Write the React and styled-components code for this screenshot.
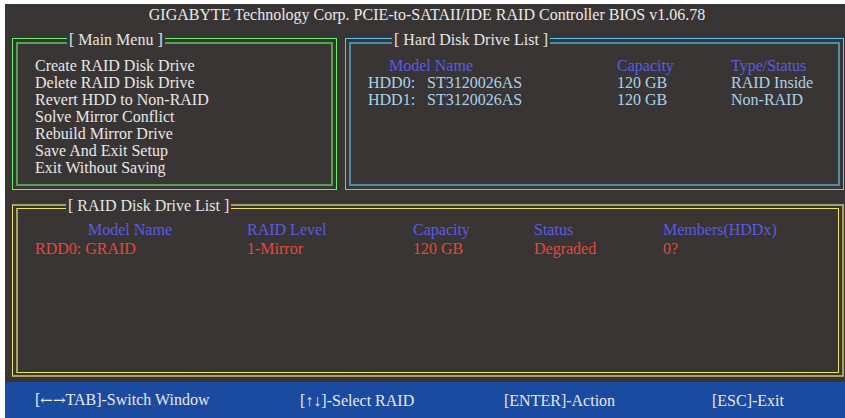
import React from "react";
import styled, { createGlobalStyle } from "styled-components";

const BG = "#393534";

const Global = createGlobalStyle`
  html, body { margin: 0; padding: 0; background: #ffffff; }
  body { font-family: "Liberation Serif", "Times New Roman", serif; }
`;

const Screen = styled.div`
  margin: 4px 0 0 5px;
  width: 840px;
  height: 414px;
  background: ${BG};
  display: flex;
  flex-direction: column;
  font-family: "Liberation Serif", "Times New Roman", serif;
  font-size: 16px;
  line-height: 17px;
  color: #e6e6e6;
`;

const Header = styled.header`
  height: 34px;
  line-height: 22px;
  padding-left: 4px;
  text-align: center;
  color: #eaeaea;
  white-space: nowrap;
`;

const Main = styled.main`
  padding: 0 1px 0 7px;
  display: flex;
  flex-direction: column;
`;

const TopRow = styled.div`
  display: grid;
  grid-template-columns: 325px 499px;
  column-gap: 8px;
  height: 152px;
  margin-bottom: 14px;
`;

const Panel = styled.section`
  position: relative;
  box-sizing: border-box;
  height: ${(p) => p.$h}px;
  border: 1px solid ${(p) => p.$outer};
  box-shadow: inset 0 0 0 3px ${BG}, inset 0 0 0 5px ${(p) => p.$inner};
  padding: ${(p) => p.$pt}px 8px 0 22px;
`;

const RaidPanel = styled(Panel)`
  border-style: solid;
  border-width: 2px 2px 2px 1px;
  border-color: ${(p) => p.$inner} ${(p) => p.$inner} ${(p) => p.$inner} ${(p) => p.$outer};
  box-shadow: none;

  &::before {
    content: "";
    position: absolute;
    top: 2px;
    left: 3px;
    right: 3px;
    bottom: 2px;
    border-style: solid;
    border-width: 1px 1px 1px 2px;
    border-color: ${(p) => p.$outer} ${(p) => p.$outer} ${(p) => p.$outer} ${(p) => p.$inner};
    pointer-events: none;
  }
`;

const PanelTitle = styled.h2`
  position: absolute;
  z-index: 1;
  top: ${(p) => p.$top ?? -8}px;
  left: ${(p) => p.$left}px;
  margin: 0;
  padding: 0 2px;
  background: ${BG};
  font-size: 16px;
  font-weight: normal;
  line-height: 17px;
  color: #e6e6e6;
  white-space: nowrap;
`;

const MenuList = styled.ul`
  list-style: none;
  margin: 0;
  padding: 0;
`;

const MenuItem = styled.li`
  color: #e8e8e8;
  white-space: nowrap;
`;

const Row = styled.div`
  position: relative;
  display: grid;
  grid-template-columns: ${(p) => p.$cols};
  color: ${(p) => p.$color};
  white-space: nowrap;
  margin-bottom: ${(p) => p.$gap || 0}px;
`;

const Cell = styled.span`
  padding-left: ${(p) => p.$indent || 0}px;
  grid-column: ${(p) => p.$span || "auto"};
`;

const Footer = styled.footer`
  margin-top: 5px;
  height: 36px;
  background: #1a4ba1;
  display: grid;
  grid-template-columns: 265px 204px 208px auto;
  align-items: center;
  padding-left: 30px;
  color: #e8e8e8;
  white-space: nowrap;
`;

const Arrow = styled.span`
  font-family: ${(p) =>
    p.$wide ? '"DejaVu Serif", "Liberation Serif", serif' : '"Liberation Serif", serif'};
  font-size: ${(p) => (p.$wide ? 15 : 16)}px;
`;

const HEAD = "#5b5be4";
const HDD = "#a9d3ea";
const RED = "#e2493a";

const hddCols = "59px 190px 114px auto";
const raidCols = "212px 166px 121px 129px auto";

export default function App() {
  return (
    <>
      <Global />
      <Screen>
        <Header>GIGABYTE Technology Corp. PCIE-to-SATAII/IDE RAID Controller BIOS v1.06.78</Header>
        <Main>
          <TopRow>
            <Panel $h={152} $outer="#66ee66" $inner="#5a9d55" $pt={18}>
              <PanelTitle $left={54}>[ Main Menu ]</PanelTitle>
              <MenuList>
                <MenuItem>Create RAID Disk Drive</MenuItem>
                <MenuItem>Delete RAID Disk Drive</MenuItem>
                <MenuItem>Revert HDD to Non-RAID</MenuItem>
                <MenuItem>Solve Mirror Conflict</MenuItem>
                <MenuItem>Rebuild Mirror Drive</MenuItem>
                <MenuItem>Save And Exit Setup</MenuItem>
                <MenuItem>Exit Without Saving</MenuItem>
              </MenuList>
            </Panel>
            <Panel $h={152} $outer="#5cc9f2" $inner="#4d8ea6" $pt={18}>
              <PanelTitle $left={46}>[ Hard Disk Drive List ]</PanelTitle>
              <Row $cols={hddCols} $color={HEAD}>
                <Cell $span="1 / 3" $indent={21}>Model Name</Cell>
                <Cell>Capacity</Cell>
                <Cell>Type/Status</Cell>
              </Row>
              <Row $cols={hddCols} $color={HDD}>
                <Cell>HDD0:</Cell>
                <Cell>ST3120026AS</Cell>
                <Cell>120 GB</Cell>
                <Cell>RAID Inside</Cell>
              </Row>
              <Row $cols={hddCols} $color={HDD}>
                <Cell>HDD1:</Cell>
                <Cell>ST3120026AS</Cell>
                <Cell>120 GB</Cell>
                <Cell>Non-RAID</Cell>
              </Row>
            </Panel>
          </TopRow>
          <RaidPanel $h={173} $outer="#f2e465" $inner="#a9a25e" $pt={15}>
            <PanelTitle $left={53} $top={-9}>[ RAID Disk Drive List ]</PanelTitle>
            <Row $cols={raidCols} $color={HEAD} $gap={2}>
              <Cell $indent={53}>Model Name</Cell>
              <Cell>RAID Level</Cell>
              <Cell>Capacity</Cell>
              <Cell>Status</Cell>
              <Cell>Members(HDDx)</Cell>
            </Row>
            <Row $cols={raidCols} $color={RED}>
              <Cell>RDD0: GRAID</Cell>
              <Cell>1-Mirror</Cell>
              <Cell>120 GB</Cell>
              <Cell>Degraded</Cell>
              <Cell>0?</Cell>
            </Row>
          </RaidPanel>
        </Main>
        <Footer>
          <span>[<Arrow $wide>←→</Arrow>TAB]-Switch Window</span>
          <span>[<Arrow>↑↓</Arrow>]-Select RAID</span>
          <span>[ENTER]-Action</span>
          <span>[ESC]-Exit</span>
        </Footer>
      </Screen>
    </>
  );
}
